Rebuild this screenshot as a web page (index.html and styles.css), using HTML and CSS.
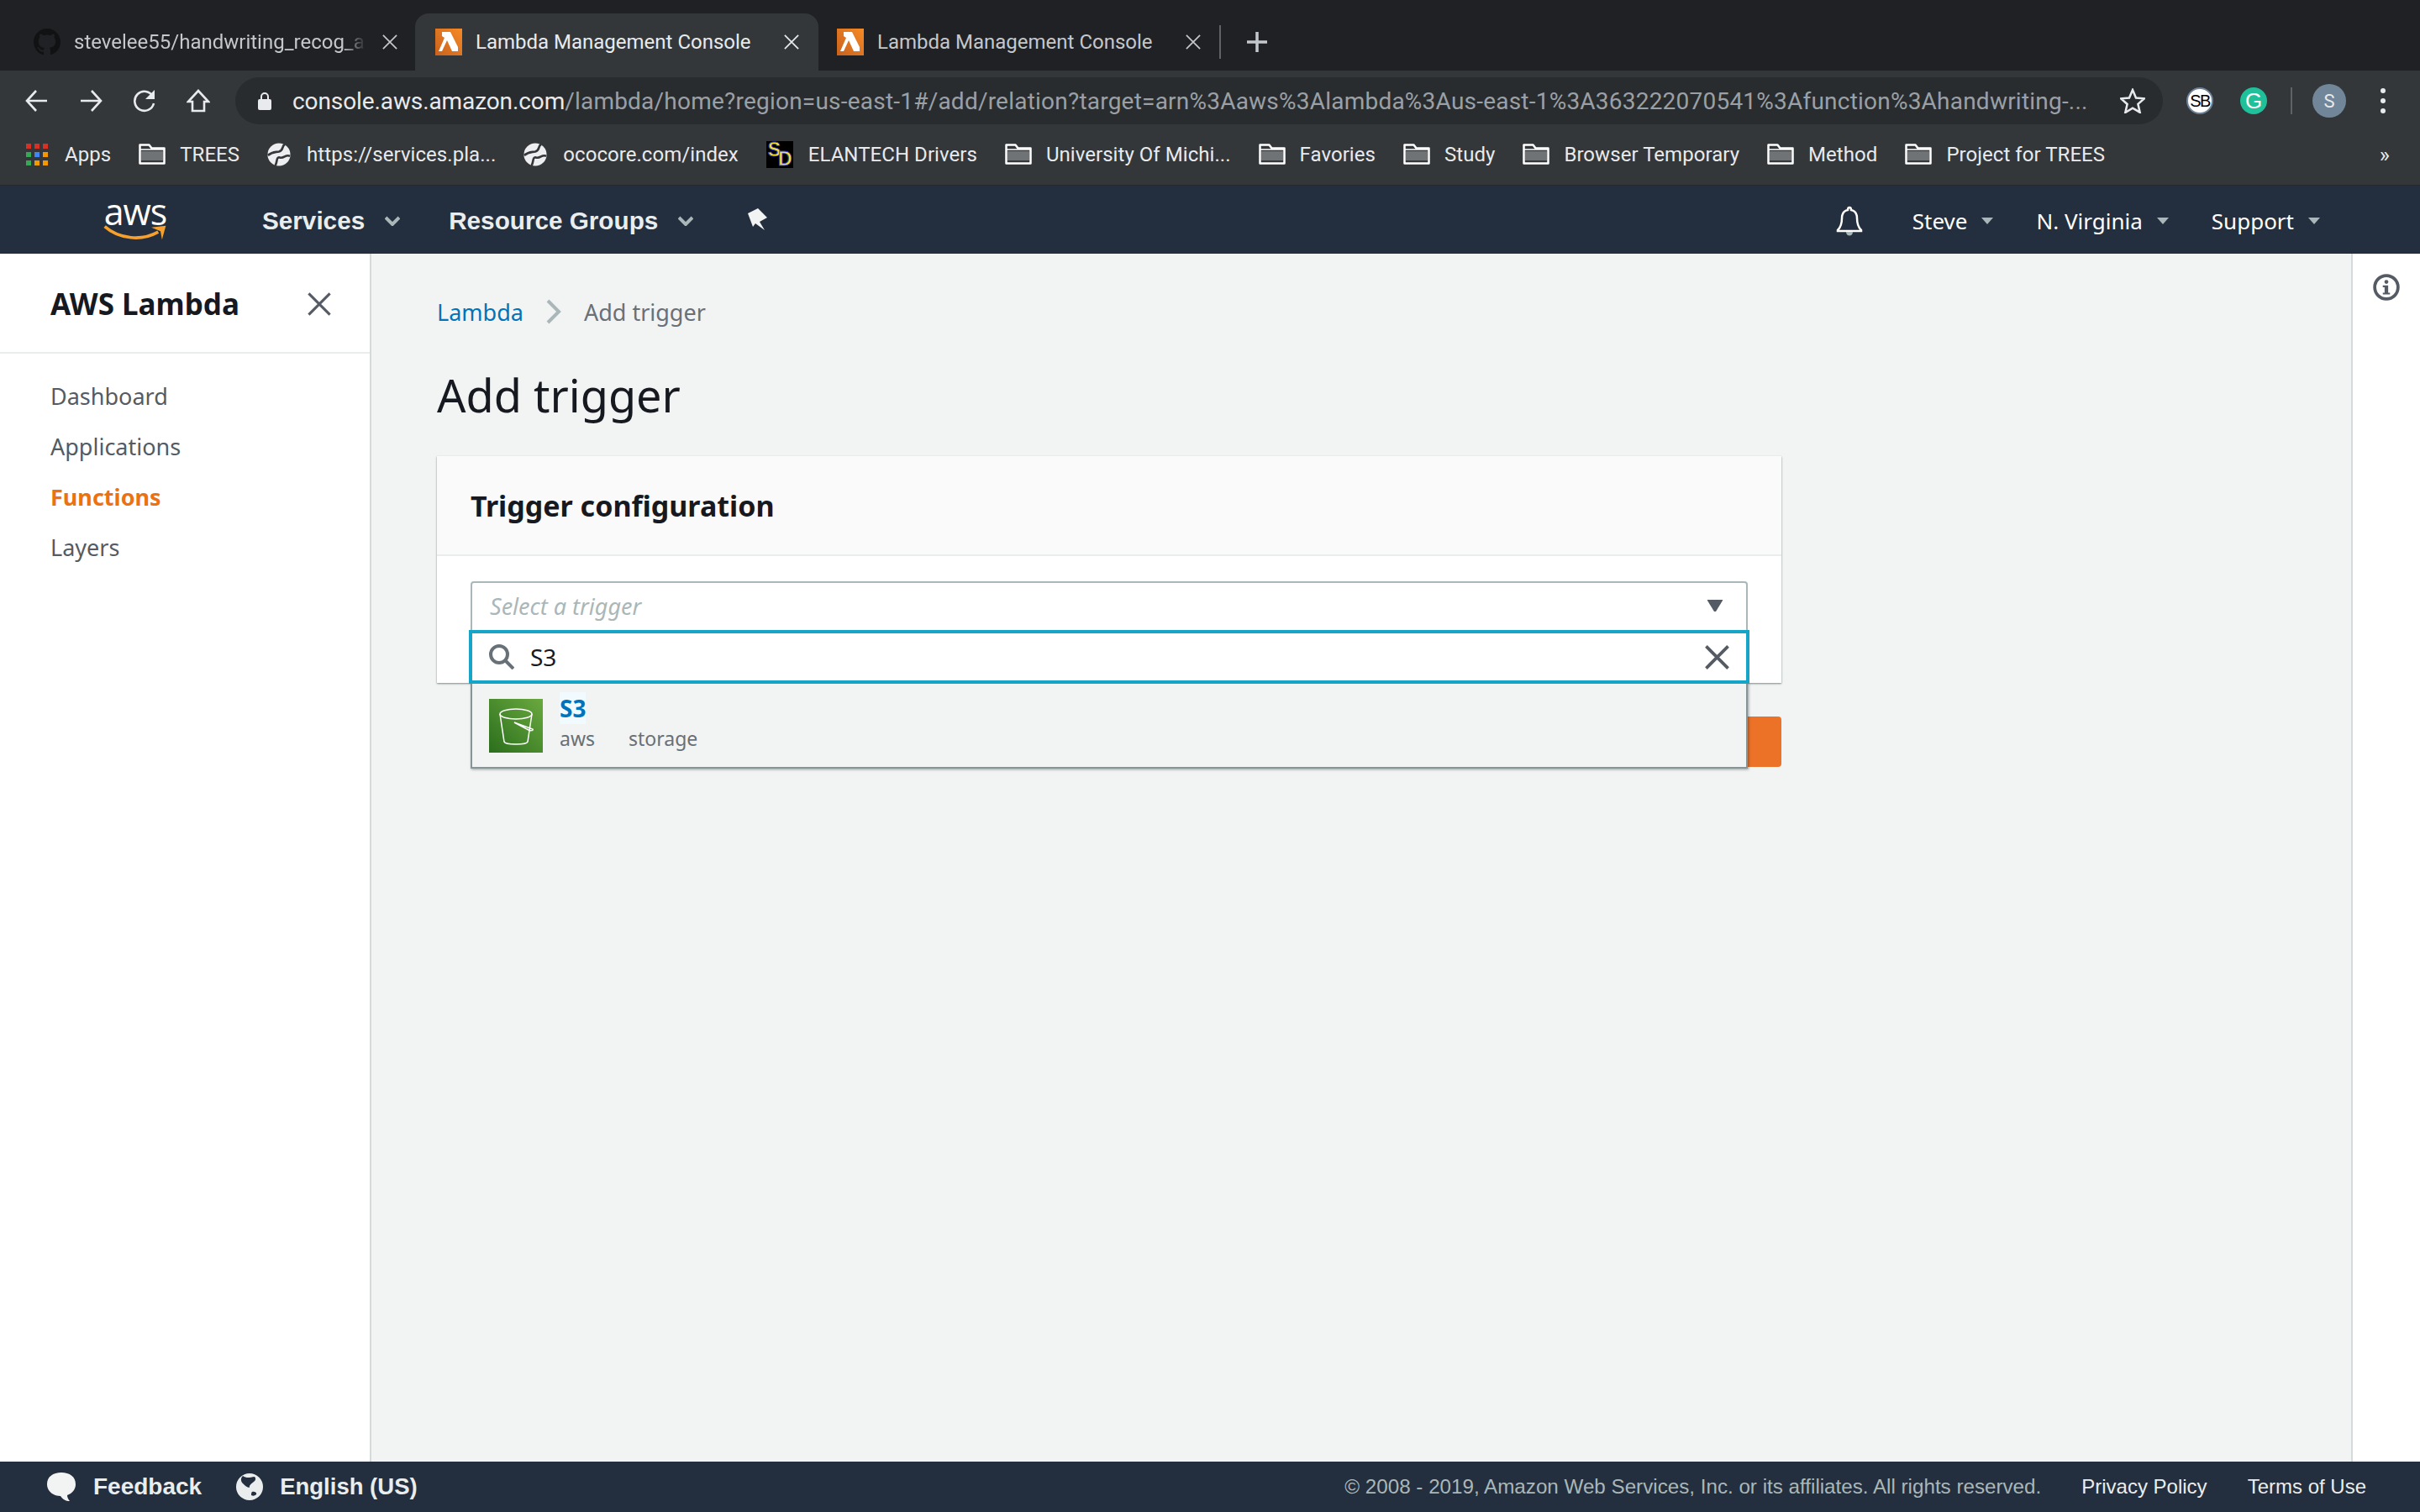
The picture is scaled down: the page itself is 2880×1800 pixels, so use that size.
FILE: index.html
```html
<!DOCTYPE html>
<html>
<head>
	<title>Lambda Management Console</title>
	<link rel="stylesheet" href="styles.css">
</head>
<body>

	<svg class="defs" width="0" height="0">
		<defs>
			<linearGradient id="lambdag" x1="0" y1="1" x2="1" y2="0"><stop offset="0" stop-color="#c9611d"/><stop offset="1" stop-color="#f58a26"/></linearGradient>
		</defs>
		<symbol id="folder" viewBox="0 0 32 25">
			<path d="M1.500 1.500h11l3 4h15v18h-29z" fill="#33373a" stroke="#fff" stroke-width="2.500" stroke-linejoin="round"/>
			<path d="M3 9h26v11H3z" fill="#6f7376"/>
			<path d="M2 7h28" stroke="#fff" stroke-width="1.500" fill="none"/>
		</symbol>
		<symbol id="globe" viewBox="0 0 32 32">
			<circle cx="16" cy="16" r="15.500" fill="#eceef0"/>
			<path d="M24 2C19 5 23 10 16 12 10 13 7 12 1 17M31 18C25 15 23 22 17 20 12 19 14 26 11 31" fill="none" stroke="#33373a" stroke-width="3"/>
		</symbol>
		<symbol id="lambda" viewBox="0 0 32 32">
			<rect width="32" height="32" fill="url(#lambdag)"/>
			<path d="M8 4h10l9 18v5h-7L14 14 8 27H4l7-16-3-2z" fill="#fff"/>
		</symbol>
		<symbol id="close" viewBox="0 0 20 20">
			<path class="close-path" d="M1 1l18 18M19 1L1 19"/>
		</symbol>
		<symbol id="caret" viewBox="0 0 16 10">
			<path d="M1 1h14L8 9z" fill="currentColor"/>
		</symbol>
	</svg>

	<!-- browser chrome -->
	<div class="tabstrip">
		<div class="tab tab-first">
			<svg class="favicon" viewBox="0 0 16 16"><path fill="#111214" d="M8 0C3.600 0 0 3.600 0 8c0 3.500 2.300 6.500 5.500 7.600.4.100.5-.2.500-.4v-1.400c-2.200.5-2.700-1-2.700-1-.4-.9-.9-1.200-.9-1.200-.7-.5.100-.5.100-.5.800.1 1.200.8 1.200.8.700 1.200 1.900.9 2.300.7.100-.5.300-.9.500-1.100-1.800-.2-3.600-.9-3.600-4 0-.9.300-1.600.8-2.100-.1-.2-.4-1 .1-2.100 0 0 .7-.2 2.200.8.600-.2 1.300-.3 2-.3s1.400.1 2 .3c1.500-1 2.200-.8 2.200-.8.400 1.100.2 1.900.1 2.100.5.600.8 1.300.8 2.100 0 3.100-1.900 3.700-3.700 3.900.3.300.6.800.6 1.500v2.200c0 .2.100.5.600.4C13.700 14.500 16 11.500 16 8c0-4.400-3.600-8-8-8z"/></svg>
			<span class="tab-title tab-title-faded">stevelee55/handwriting_recog_a</span>
			<svg class="tab-close"><use href="#close"/></svg>
		</div>
		<div class="tab tab-active">
			<svg class="favicon"><use href="#lambda"/></svg>
			<span class="tab-title">Lambda Management Console</span>
			<svg class="tab-close"><use href="#close"/></svg>
		</div>
		<div class="tab tab-last">
			<svg class="favicon"><use href="#lambda"/></svg>
			<span class="tab-title">Lambda Management Console</span>
			<svg class="tab-close"><use href="#close"/></svg>
		</div>
		<svg class="newtab" viewBox="0 0 24 24"><path d="M12 0v24M0 12h24" stroke="#c4c7cb" stroke-width="3.500" fill="none"/></svg>
	</div>

	<div class="toolbar">
		<svg class="tool" viewBox="0 0 28 28"><path d="M26 14H3M13 2L2 14l11 12" fill="none" stroke="#e8eaed" stroke-width="2.600"/></svg>
		<svg class="tool" viewBox="0 0 28 28"><path d="M2 14h23M15 2l11 12-11 12" fill="none" stroke="#e8eaed" stroke-width="2.600"/></svg>
		<svg class="tool" viewBox="0 0 28 28"><path d="M24 9a11.500 11.500 0 1 0 1 8" fill="none" stroke="#e8eaed" stroke-width="2.600"/><path d="M26 1v11H15z" fill="#e8eaed"/></svg>
		<svg class="tool" viewBox="0 0 28 28"><path d="M14 2L2 15h5v11h14V15h5z" fill="none" stroke="#e8eaed" stroke-width="2.600"/></svg>
		<div class="omnibox">
			<svg class="lock" viewBox="0 0 16 22"><path d="M4 10V6a4 4 0 0 1 8 0v4" fill="none" stroke="#e8eaed" stroke-width="2"/><rect y="9" width="16" height="13" rx="2" fill="#e8eaed"/></svg>
			<span class="url"><span class="url-host">console.aws.amazon.com</span>/lambda/home?region=us-east-1#/add/relation?target=arn%3Aaws%3Alambda%3Aus-east-1%3A363222070541%3Afunction%3Ahandwriting-...</span>
			<svg class="star" viewBox="0 0 30 30"><path d="M15 2l4 9.500 10 .8-7.600 6.600 2.300 10L15 23.600 6.300 29l2.300-10L1 12.300l10-.8z" fill="none" stroke="#e8eaed" stroke-width="2.500"/></svg>
		</div>
		<div class="ext ext-sb"><span>SB</span></div>
		<div class="ext ext-g"><span>G</span></div>
		<div class="toolbar-sep"></div>
		<div class="avatar">S</div>
		<div class="dots"><i></i><i></i><i></i></div>
	</div>

	<div class="bookmarks">
		<a class="bm"><svg class="bm-icon" viewBox="0 0 26 26"><rect width="6" height="6" fill="#d93025"/><rect x="10" width="6" height="6" fill="#d93025"/><rect x="20" width="6" height="6" fill="#d93025"/><rect y="10" width="6" height="6" fill="#34a853"/><rect x="10" y="10" width="6" height="6" fill="#4285f4"/><rect x="20" y="10" width="6" height="6" fill="#f29900"/><rect y="20" width="6" height="6" fill="#34a853"/><rect x="10" y="20" width="6" height="6" fill="#f29900"/><rect x="20" y="20" width="6" height="6" fill="#f29900"/></svg>Apps</a>
		<a class="bm"><svg class="bm-folder"><use href="#folder"/></svg>TREES</a>
		<a class="bm"><svg class="bm-globe"><use href="#globe"/></svg>https://services.pla...</a>
		<a class="bm"><svg class="bm-globe"><use href="#globe"/></svg>ococore.com/index</a>
		<a class="bm"><span class="bm-sd"><b>S</b><b>D</b></span>ELANTECH Drivers</a>
		<a class="bm"><svg class="bm-folder"><use href="#folder"/></svg>University Of Michi...</a>
		<a class="bm"><svg class="bm-folder"><use href="#folder"/></svg>Favories</a>
		<a class="bm"><svg class="bm-folder"><use href="#folder"/></svg>Study</a>
		<a class="bm"><svg class="bm-folder"><use href="#folder"/></svg>Browser Temporary</a>
		<a class="bm"><svg class="bm-folder"><use href="#folder"/></svg>Method</a>
		<a class="bm"><svg class="bm-folder"><use href="#folder"/></svg>Project for TREES</a>
		<span class="bm-more">»</span>
	</div>

	<!-- aws console nav -->
	<div class="awsnav">
		<div class="aws-logo">
			<span>aws</span>
			<svg viewBox="0 0 82 22"><path d="M1 3C20 20 50 22 71 10" fill="none" stroke="#f6a02d" stroke-width="4"/><path d="M62 4l19-2-5 18-2-11z" fill="#f6a02d"/></svg>
		</div>
		<a class="nav-strong">Services</a><svg class="nav-chevron" viewBox="0 0 18 12"><path d="M1 2l8 8 8-8" fill="none" stroke="#aab7b8" stroke-width="4"/></svg>
		<a class="nav-strong nav-groups">Resource Groups</a><svg class="nav-chevron" viewBox="0 0 18 12"><path d="M1 2l8 8 8-8" fill="none" stroke="#aab7b8" stroke-width="4"/></svg>
		<svg class="nav-pin" viewBox="0 0 24 27"><path d="M1 6L13 0l11 11-9 5 6 10-11-8-3 4z" fill="#f2f3f3"/></svg>
		<div class="nav-right">
			<svg class="nav-bell" viewBox="0 0 32 36"><path d="M16 2c-2 0-2 2-2 3-5 1-7 5-7 10 0 6-1 10-5 14v1h28v-1c-4-4-5-8-5-14 0-5-2-9-7-10 0-1 0-3-2-3z" fill="none" stroke="#fff" stroke-width="2.500"/><path d="M12 31c0 6 8 6 8 0" fill="#aab7b8"/></svg>
			<a class="nav-item">Steve<svg class="nav-caret"><use href="#caret"/></svg></a>
			<a class="nav-item">N. Virginia<svg class="nav-caret"><use href="#caret"/></svg></a>
			<a class="nav-item">Support<svg class="nav-caret"><use href="#caret"/></svg></a>
		</div>
	</div>

	<div class="layout">
		<div class="sidebar">
			<div class="side-head">
				<span>AWS Lambda</span>
				<svg class="side-close"><use href="#close"/></svg>
			</div>
			<ul class="side-list">
				<li>Dashboard</li>
				<li>Applications</li>
				<li class="side-current">Functions</li>
				<li>Layers</li>
			</ul>
		</div>

		<div class="main">
			<div class="crumbs">
				<a>Lambda</a>
				<svg viewBox="0 0 20 30"><path d="M3 2l13 13L3 28" fill="none" stroke="#aab7b8" stroke-width="4"/></svg>
				<span>Add trigger</span>
			</div>
			<h1>Add trigger</h1>

			<div class="panel">
				<div class="panel-head">Trigger configuration</div>
				<div class="panel-body">
					<div class="select">
						<em>Select a trigger</em>
						<svg class="select-caret" viewBox="0 0 20 16"><path d="M1 1h18a1 1 0 0 1 0 1l-8 13h-2L1 2a1 1 0 0 1 0-1z" fill="#545b64"/></svg>

						<!-- open dropdown, sits over the panel edge and the buttons -->
						<div class="search">
							<svg class="search-icon" viewBox="0 0 30 30"><circle cx="12" cy="12" r="10" fill="none" stroke="#687078" stroke-width="4"/><path d="M19 19l10 10" stroke="#687078" stroke-width="4"/></svg>
							<span class="search-text">S3</span>
							<svg class="search-clear"><use href="#close"/></svg>
						</div>
						<div class="dropdown">
							<svg class="s3-icon" viewBox="0 0 64 64">
								<defs><linearGradient id="s3g" x1="0" y1="1" x2="1" y2="0"><stop offset="0" stop-color="#2b6e1c"/><stop offset="1" stop-color="#6aa93f"/></linearGradient></defs>
								<rect width="64" height="64" fill="url(#s3g)"/>
								<g fill="none" stroke="#fff" stroke-width="1.500">
									<ellipse cx="32" cy="18" rx="19" ry="6"/>
									<path d="M13 18l5 33c1 4 27 4 28 0l5-33"/>
									<path d="M30 28l22 8c1 2-3 2-5 1z"/>
								</g>
							</svg>
							<div class="option">
								<div class="option-name"><mark>S3</mark></div>
								<div class="option-tags"><span>aws</span><span>storage</span></div>
							</div>
						</div>
					</div>
				</div>
			</div>

			<div class="actions">
				<button class="primary"></button>
			</div>
		</div>

		<div class="helpbar">
			<svg viewBox="0 0 30 30"><circle cx="15" cy="15" r="13" fill="none" stroke="#545b64" stroke-width="3.500"/><circle cx="15" cy="9" r="2.200" fill="#545b64"/><path d="M11 13h6v8h2v2h-8v-2h2v-6h-2z" fill="#545b64"/></svg>
		</div>
	</div>

	<div class="footer">
		<svg class="foot-icon" viewBox="0 0 36 36"><path d="M18 1c10 0 17 5 17 14 0 6-4 11-10 13 0 2 1 5 3 7-5 0-8-2-11-6C8 29 1 23 1 15 1 6 8 1 18 1z" fill="#f2f3f3"/></svg>
		<a class="foot-strong foot-feedback">Feedback</a>
		<svg class="foot-globe" viewBox="0 0 32 32"><circle cx="16" cy="16" r="16" fill="#eaeded"/><path d="M8 3c4 3 8 2 14 1 2 2 1 5-1 6-3 2-6 5-5 7-3 0-6-3-9-6-2-3-1-6 1-8zM19 22c3-1 6 1 5 3-2 2-4 2-6 1 0-2 0-3 1-4z" fill="#232f3e"/></svg>
		<a class="foot-strong">English (US)</a>
		<span class="foot-copy">© 2008 - 2019, Amazon Web Services, Inc. or its affiliates. All rights reserved.</span>
		<a class="foot-link">Privacy Policy</a>
		<a class="foot-link">Terms of Use</a>
	</div>

</body>
</html>
```

FILE: styles.css
```css
* {
	box-sizing : border-box;
}
html, body {
	margin : 0;
	height : 100%;
}
body {
	display : flex;
	flex-direction : column;
	width : 2880px;
	height : 1800px;
	overflow : hidden;
	font-family : "Noto Sans", sans-serif;
	background : #f2f3f3;
}
.defs {
	position : absolute;
}
.close-path {
	fill : none;
	stroke : currentColor;
	stroke-width : var(--close-width, 1.9);
}

/* tabs */
.tabstrip {
	display : flex;
	align-items : center;
	height : 84px;
	padding-top : 16px;
	background : #202124;
	font-family : Roboto, sans-serif;
	font-size : 24px;
	flex : none;
}
.tab {
	display : flex;
	align-items : center;
	height : 68px;
	color : #c4c7cb;
}
.tab-first {
	width : 494px;
	padding-left : 40px;
}
.tab-active {
	width : 480px;
	padding-left : 24px;
	background : #33373a;
	border-radius : 16px 16px 0 0;
	color : #e8eaed;
}
.tab-last {
	position : relative;
	width : 477px;
	padding-left : 22px;
}
.tab-last:after {
	content : "";
	position : absolute;
	right : -2px;
	top : 14px;
	height : 40px;
	width : 2px;
	background : #5f6368;
}
.favicon {
	width : 32px;
	height : 32px;
	flex : none;
}
.tab-title {
	margin-left : 16px;
	width : 348px;
	white-space : nowrap;
}
.tab-title-faded {
	-webkit-mask-image : linear-gradient(to right, #000 92%, transparent);
	mask-image : linear-gradient(to right, #000 92%, transparent);
}
.tab-close {
	width : 18px;
	height : 18px;
	margin-left : 19px;
	flex : none;
}
.newtab {
	width : 24px;
	height : 24px;
	margin-left : 33px;
}

/* address row */
.toolbar {
	display : flex;
	align-items : center;
	height : 64px;
	padding-top : 8px;
	background : #33373a;
	flex : none;
}
.tool {
	width : 28px;
	height : 28px;
	margin-left : 36px;
	flex : none;
}
.tool:first-child {
	margin-left : 30px;
}
.omnibox {
	display : flex;
	align-items : center;
	width : 2294px;
	height : 56px;
	margin-left : 30px;
	padding-left : 27px;
	border-radius : 28px;
	background : #292c2f;
	flex : none;
}
.lock {
	width : 16px;
	height : 22px;
	flex : none;
}
.url {
	width : 2175px;
	margin-left : 25px;
	font-family : Roboto, sans-serif;
	font-size : 28px;
	letter-spacing : 0.22px;
	color : #9aa0a6;
	white-space : nowrap;
}
.url-host {
	color : #e8eaed;
	letter-spacing : -0.1px;
}
.star {
	width : 30px;
	height : 30px;
	flex : none;
}
.ext {
	display : flex;
	align-items : center;
	justify-content : center;
	width : 32px;
	height : 32px;
	border-radius : 50%;
	flex : none;
	font-family : "Liberation Sans", sans-serif;
}
.ext-sb {
	margin-left : 28px;
	background : #fff;
	border : 2px solid #6f8296;
	color : #000;
	font-size : 20px;
	letter-spacing : -1.500px;
}
.ext-g {
	margin-left : 32px;
	background : #1fc09a;
	color : #fff;
	font-size : 26px;
}
.toolbar-sep {
	width : 2px;
	height : 32px;
	margin-left : 28px;
	background : #5f6368;
}
.avatar {
	display : flex;
	align-items : center;
	justify-content : center;
	width : 40px;
	height : 40px;
	margin-left : 24px;
	border-radius : 50%;
	background : #718799;
	color : #e8eaed;
	font-size : 22px;
	font-family : Roboto, sans-serif;
}
.dots {
	display : flex;
	flex-direction : column;
	gap : 6px;
	margin-left : 41px;
}
.dots i {
	width : 6px;
	height : 6px;
	border-radius : 50%;
	background : #e8eaed;
}

/* bookmarks */
.bookmarks {
	display : flex;
	align-items : center;
	height : 73px;
	padding-left : 31px;
	padding-bottom : 1px;
	gap : 33px;
	background : #33373a;
	border-bottom : 1px solid #26292c;
	font-family : Roboto, sans-serif;
	font-size : 24px;
	letter-spacing : 0.05px;
	color : #e8eaed;
	flex : none;
}
.bm {
	display : flex;
	align-items : center;
	white-space : nowrap;
}
.bm-icon {
	width : 26px;
	height : 26px;
	margin-right : 20px;
}
.bm-folder {
	width : 32px;
	height : 25px;
	margin-right : 17px;
}
.bm-globe {
	width : 28px;
	height : 28px;
	margin-right : 19px;
}
.bm-sd {
	display : flex;
	width : 32px;
	height : 32px;
	margin-right : 18px;
	padding-left : 2px;
	background : #000;
	color : #f7e12c;
	font-family : "Liberation Sans", sans-serif;
	font-size : 23px;
	line-height : 20px;
	letter-spacing : 0;
	-webkit-text-stroke : 0.8px #2b3bd0;
}
.bm-sd b + b {
	margin-top : 11px;
	margin-left : -3px;
}
.bm-more {
	margin-left : auto;
	margin-right : 36px;
	font-size : 26px;
}

/* aws nav */
.awsnav {
	display : flex;
	align-items : center;
	height : 81px;
	padding-top : 2px;
	padding-left : 120px;
	background : #232f3e;
	color : #fff;
	flex : none;
}
.aws-logo {
	display : flex;
	flex-direction : column;
	width : 82px;
	height : 50px;
	margin-top : -2px;
}
.aws-logo span {
	font-family : "Open Sans", sans-serif;
	font-size : 43px;
	line-height : 30px;
	text-align : center;
	letter-spacing : -1px;
}
.aws-logo svg {
	width : 82px;
	height : 22px;
}
.nav-strong {
	font-family : "Liberation Sans", sans-serif;
	font-weight : bold;
	font-size : 29.700px;
	color : #eaeded;
	margin-left : 110px;
}
.nav-groups {
	margin-left : 58px;
}
.nav-chevron {
	width : 18px;
	height : 12px;
	margin-left : 24px;
}
.nav-pin {
	width : 24px;
	height : 27px;
	margin-left : 64px;
	margin-top : -2px;
}
.nav-right {
	display : flex;
	align-items : center;
	margin-left : auto;
	padding-right : 118px;
	font-size : 26px;
}
.nav-bell {
	width : 32px;
	height : 36px;
	margin-right : 59px;
}
.nav-item {
	display : flex;
	align-items : center;
	margin-right : 50px;
}
.nav-item:last-child {
	margin-right : 0;
}
.nav-caret {
	width : 16px;
	height : 10px;
	margin-left : 16px;
	color : #aab7b8;
}

/* page */
.layout {
	display : flex;
	flex : 1;
	min-height : 0;
}
.sidebar {
	width : 442px;
	background : #fff;
	border-right : 2px solid #d5dbdb;
	flex : none;
}
.side-head {
	display : flex;
	align-items : center;
	justify-content : space-between;
	height : 119px;
	padding : 2px 46px 0 60px;
	border-bottom : 2px solid #eaeded;
	font-size : 35px;
	font-weight : 700;
	color : #16191f;
}
.side-close {
	--close-width : 2.2;
	width : 28px;
	height : 28px;
	color : #545b64;
}
.side-list {
	list-style : none;
	margin : 21px 0 0;
	padding : 0 0 0 60px;
	font-size : 27px;
	color : #545b64;
}
.side-list li {
	height : 60px;
	line-height : 60px;
}
.side-current {
	color : #ec7211;
	font-weight : 700;
}
.main {
	flex : 1;
	padding : 47px 0 0 78px;
}
.crumbs {
	display : flex;
	align-items : center;
	height : 44px;
	font-size : 27px;
	color : #687078;
}
.crumbs a {
	color : #0073bb;
}
.crumbs svg {
	width : 20px;
	height : 30px;
	margin : 0 26px;
}
h1 {
	margin : 39px 0 0;
	font-size : 54px;
	font-weight : 400;
	line-height : 76px;
	color : #16191f;
}
.panel {
	width : 1600px;
	height : 270px;
	margin-top : 35px;
	background : #fff;
	box-shadow : 0 1px 2px rgba(0, 28, 36, 0.5);
}
.panel-head {
	height : 119px;
	padding : 0 40px;
	line-height : 118px;
	background : #fafafa;
	border-bottom : 2px solid #eaeded;
	font-size : 34px;
	font-weight : 700;
	color : #16191f;
}
.panel-body {
	padding : 30px 40px;
}
.select {
	position : relative;
	display : flex;
	align-items : center;
	height : 60px;
	padding : 0 0 0 21px;
	border : 2px solid #aab7b8;
	border-radius : 4px 4px 0 0;
	font-size : 27px;
	color : #aab7b8;
}
.select em {
	margin-top : -2px;
}
.select-caret {
	width : 20px;
	height : 16px;
	margin-left : auto;
	margin-right : 27px;
	margin-top : -2px;
}
.search {
	position : absolute;
	left : -4px;
	right : -4px;
	top : 56px;
	display : flex;
	align-items : center;
	height : 64px;
	padding : 0 20px;
	background : #fff;
	border : 4px solid #16a4c8;
	color : #16191f;
	z-index : 3;
}
.search-icon {
	width : 30px;
	height : 30px;
}
.search-text {
	margin-left : 19px;
	font-size : 28px;
}
.search-clear {
	--close-width : 2.6;
	width : 29px;
	height : 29px;
	margin-left : auto;
	color : #545b64;
}
.dropdown {
	position : absolute;
	left : -2px;
	right : -2px;
	top : 118px;
	display : flex;
	height : 103px;
	padding : 20px 20px 0;
	background : #f2f3f3;
	border : 2px solid #879596;
	border-top : 0;
	box-shadow : 1px 1px 3px rgba(0, 28, 36, 0.4);
	z-index : 2;
}
.s3-icon {
	width : 64px;
	height : 64px;
	flex : none;
}
.option {
	margin-left : 20px;
	margin-top : -8px;
}
.option-name {
	font-size : 28px;
	font-weight : 700;
	line-height : 38px;
	color : #0073bb;
}
.option-name mark {
	background : #f1faff;
	color : inherit;
}
.option-tags {
	display : flex;
	gap : 40px;
	margin-top : 1px;
	font-size : 23px;
	line-height : 32px;
	color : #687078;
}
.actions {
	display : flex;
	justify-content : flex-end;
	width : 1600px;
	margin-top : 40px;
}
.primary {
	width : 160px;
	height : 60px;
	background : #ec7228;
	border : 0;
	border-radius : 4px;
}
.helpbar {
	display : flex;
	justify-content : center;
	width : 82px;
	padding-top : 24px;
	background : #fff;
	border-left : 2px solid #d5dbdb;
	flex : none;
}
.helpbar svg {
	width : 32px;
	height : 32px;
}

/* footer */
.footer {
	display : flex;
	align-items : center;
	height : 60px;
	padding : 0 64px 0 55px;
	background : #232f3e;
	font-family : "Liberation Sans", sans-serif;
	font-size : 24px;
	color : #eaeded;
	flex : none;
}
.foot-icon {
	width : 36px;
	height : 36px;
}
.foot-globe {
	width : 32px;
	height : 32px;
	margin-left : 41px;
}
.foot-strong {
	margin-left : 20px;
	font-size : 27.500px;
	font-weight : bold;
}
.foot-feedback {
	font-size : 28px;
}
.foot-copy {
	margin-left : auto;
	font-size : 24.200px;
	color : #aab7b8;
}
.foot-link {
	margin-left : 48px;
}
```
